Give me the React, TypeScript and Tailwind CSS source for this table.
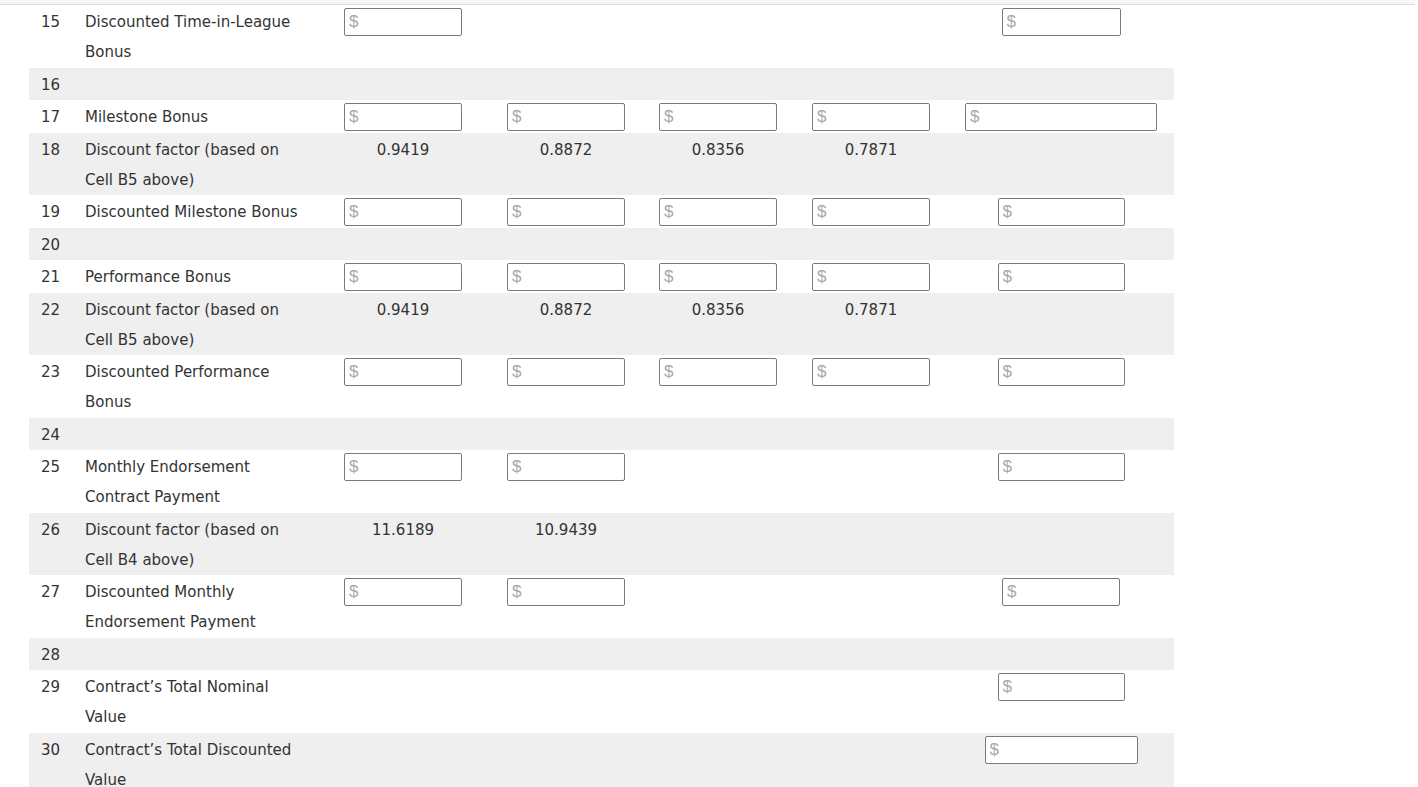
type Cell =
    | { kind: "input"; w?: string }
    | { kind: "text"; value: string }
    | null;

type Row = {
    n: number;
    label: string;
    cells: Cell[];
};

const inp = (w?: string): Cell => ({ kind: "input", w });
const txt = (value: string): Cell => ({ kind: "text", value });

const rows: Row[] = [
    { n: 15, label: "Discounted Time-in-League Bonus", cells: [inp(), null, null, null, inp("w-[119px]")] },
    { n: 16, label: "", cells: [] },
    { n: 17, label: "Milestone Bonus", cells: [inp(), inp(), inp(), inp(), inp("w-[192px]")] },
    { n: 18, label: "Discount factor (based on Cell B5 above)", cells: [txt("0.9419"), txt("0.8872"), txt("0.8356"), txt("0.7871"), null] },
    { n: 19, label: "Discounted Milestone Bonus", cells: [inp(), inp(), inp(), inp(), inp("w-[127px]")] },
    { n: 20, label: "", cells: [] },
    { n: 21, label: "Performance Bonus", cells: [inp(), inp(), inp(), inp(), inp("w-[127px]")] },
    { n: 22, label: "Discount factor (based on Cell B5 above)", cells: [txt("0.9419"), txt("0.8872"), txt("0.8356"), txt("0.7871"), null] },
    { n: 23, label: "Discounted Performance Bonus", cells: [inp(), inp(), inp(), inp(), inp("w-[127px]")] },
    { n: 24, label: "", cells: [] },
    { n: 25, label: "Monthly Endorsement Contract Payment", cells: [inp(), inp(), null, null, inp("w-[127px]")] },
    { n: 26, label: "Discount factor (based on Cell B4 above)", cells: [txt("11.6189"), txt("10.9439"), null, null, null] },
    { n: 27, label: "Discounted Monthly Endorsement Payment", cells: [inp(), inp(), null, null, inp("w-[118px]")] },
    { n: 28, label: "", cells: [] },
    { n: 29, label: "Contract\u2019s Total Nominal Value", cells: [null, null, null, null, inp("w-[127px]")] },
    { n: 30, label: "Contract\u2019s Total Discounted Value", cells: [null, null, null, null, inp("w-[153px]")] },
];

function MoneyInput({ w }: { w?: string }) {
    return (
        <input
            type="text"
            placeholder="$"
            className={`${w ?? "w-[118px]"} h-[28px] mt-[1px] border border-[#7a7a7a] rounded-[2px] bg-white pl-[4px] text-[17px] font-light text-[#333] placeholder:text-[#a8a8a8] outline-none`}
            style={{ fontFamily: '"Liberation Sans", Arial, sans-serif' }}
        />
    );
}

function TableRow({ row, index }: { row: Row; index: number }) {
    const gray = index % 2 === 1;
    return (
        <div
            className={`grid grid-cols-[56px_245px_146px_180px_124px_182px_198px_14px] pt-[2.25px] pb-[0.25px] leading-[30px] ${gray ? "bg-[#efefef]" : "bg-white"}`}
        >
            <div className="pl-3">{row.n}</div>
            <div>
                <div className="w-[222px]">{row.label}</div>
            </div>
            {[0, 1, 2, 3, 4].map((i) => {
                const c = row.cells[i];
                return (
                    <div key={i} className="flex justify-center items-start">
                        {c?.kind === "input" && <MoneyInput w={c.w} />}
                        {c?.kind === "text" && <span>{c.value}</span>}
                    </div>
                );
            })}
            <div />
        </div>
    );
}

export default function App() {
    return (
        <div
            className="min-h-screen bg-white text-[15px] text-[#333]"
            style={{ fontFamily: '"DejaVu Sans", Verdana, sans-serif' }}
        >
            <div className="h-[5px] bg-[#f7f7f7] border-b border-[#dcdcdc] mr-[3px]" />
            <div className="pl-[29px]">
                <div className="w-[1145px]">
                    {rows.map((r, i) => (
                        <TableRow key={r.n} row={r} index={i} />
                    ))}
                </div>
            </div>
        </div>
    );
}
